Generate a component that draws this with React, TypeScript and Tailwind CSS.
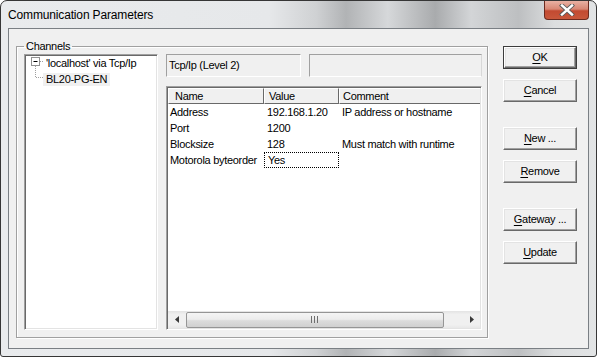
const rows = [
  { name: "Address", value: "192.168.1.20", comment: "IP address or hostname" },
  { name: "Port", value: "1200", comment: "" },
  { name: "Blocksize", value: "128", comment: "Must match with runtime" },
  { name: "Motorola byteorder", value: "Yes", comment: "", focus: true },
];

const buttons = [
  { key: "O", rest: "K", def: true, mt: "mt-[17px]" },
  { key: "C", rest: "ancel", mt: "mt-[10px]" },
  { key: "N", rest: "ew ...", mt: "mt-[25px]" },
  { key: "R", rest: "emove", mt: "mt-[10px]" },
  { key: "G", rest: "ateway ...", mt: "mt-[25px]" },
  { key: "U", rest: "pdate", mt: "mt-[10px]" },
];

function DlgButton({ k, rest, def, mt }: { k: string; rest: string; def?: boolean; mt: string }) {
  return (
    <div className={`${mt} w-[74px] h-[23px] ${def ? "border border-[#3c3c3c]" : ""}`}>
      <div className="w-full h-full flex items-center justify-center bg-[#f0f0f0] border border-t-white border-l-white border-b-[#696969] border-r-[#696969] shadow-[inset_-1px_-1px_0_#a0a0a0,inset_1px_1px_0_#e3e3e3] text-[11px] text-black">
        <span>
          <span className="underline underline-offset-2">{k}</span>
          {rest}
        </span>
      </div>
    </div>
  );
}

export default function App() {
  return (
    <div className="w-[597px] h-[357px] overflow-hidden rounded-t-[7px] rounded-b-[3px] border border-[#363636] bg-[linear-gradient(90deg,#e9ebed_0%,#e6e8ea_45%,#cfd1d3_53%,#b1b3b5_58%,#d6d8da_65%,#a9abad_73%,#d3d5d7_79%,#bdbfc1_87%,#dcdedf_93%,#e2e4e5_100%)] font-['Liberation_Sans',Arial,sans-serif] text-black">
      {/* Title bar */}
      <div className="h-[27px] flex items-start">
        <div className="h-[27px] flex items-center pl-[7px] text-[12px] text-black tracking-[-0.15px]">
          Communication Parameters
        </div>
        <div className="ml-auto mr-[7px] w-[45px] h-[19px] rounded-b-[4px] border border-t-0 border-[#6b2a1f] bg-[linear-gradient(180deg,#e9b1a3_0%,#d88774_45%,#c24a31_55%,#c8573b_100%)] flex items-center justify-center">
          <svg width="16" height="12" viewBox="0 0 16 12">
            <path d="M3 1.5 L13 10.5 M13 1.5 L3 10.5" stroke="#5a5a5a" strokeWidth="4.2" strokeLinecap="square" />
            <path d="M3 1.5 L13 10.5 M13 1.5 L3 10.5" stroke="#ffffff" strokeWidth="2.4" strokeLinecap="square" />
          </svg>
        </div>
      </div>

      {/* Client area */}
      <div className="mx-[7px] h-[321px] border border-[#7a7f84] bg-[#f0f0f0] flex items-start tracking-[-0.3px]">
        <fieldset className="ml-[7px] mt-[11px] w-[472px] h-[298px] border border-[#a0a0a0] shadow-[inset_1px_1px_0_#fff,1px_1px_0_#fff]">
          <legend className="ml-[7px] px-[2px] text-[11px] leading-[13px]">Channels</legend>
          <div className="flex gap-[8px] pl-[7px] mt-[1px]">
            {/* Tree */}
            <div className="w-[134px] h-[276px] bg-white border border-t-[#a0a0a0] border-l-[#a0a0a0] border-b-white border-r-white shadow-[inset_1px_1px_0_#696969,inset_-1px_-1px_0_#e3e3e3] p-[1px]">
              <div className="flex -mt-px">
                <svg width="17" height="32" viewBox="0 0 17 32" className="shrink-0">
                  <rect x="5.5" y="2.5" width="8" height="8" fill="#fff" stroke="#919191" />
                  <path d="M7.5 6.5 H11.5" stroke="#000" />
                  <path d="M14 6.5 H17" stroke="#a0a0a0" strokeDasharray="1 1" />
                  <path d="M9.5 11 V23" stroke="#a0a0a0" strokeDasharray="1 1" />
                  <path d="M10 22.5 H17" stroke="#a0a0a0" strokeDasharray="1 1" />
                </svg>
                <div className="text-[11px]">
                  <div className="h-[16px] flex items-center">
                    <span className="px-[3px] leading-[13px]">'localhost' via Tcp/Ip</span>
                  </div>
                  <div className="h-[16px] flex items-center">
                    <span className="px-[3px] leading-[13px] bg-[#f0f0f0]">BL20-PG-EN</span>
                  </div>
                </div>
              </div>
            </div>

            {/* Right column */}
            <div className="w-[316px] flex flex-col">
              <div className="flex gap-[8px]">
                <div className="w-[135px] h-[23px] border border-t-[#a0a0a0] border-l-[#a0a0a0] border-b-white border-r-white flex items-center pl-[2px] text-[11px]">
                  Tcp/Ip (Level 2)
                </div>
                <div className="w-[173px] h-[23px] border border-t-[#a0a0a0] border-l-[#a0a0a0] border-b-white border-r-[#d8d8d8]" />
              </div>

              {/* List view */}
              <div className="mt-[9px] h-[244px] bg-white border border-t-[#a0a0a0] border-l-[#a0a0a0] border-b-white border-r-white shadow-[inset_1px_1px_0_#696969,inset_-1px_-1px_0_#e3e3e3] p-[1px] flex flex-col text-[11px]">
                <div className="h-[16px] flex bg-[#f0f0f0] shrink-0">
                  <div className="w-[96px] pl-[6px] flex items-center border-t border-l border-t-white border-l-white border-r border-b border-r-[#696969] border-b-[#696969]">Name</div>
                  <div className="w-[75px] pl-[4px] flex items-center border-t border-l border-t-white border-l-white border-r border-b border-r-[#696969] border-b-[#696969]">Value</div>
                  <div className="flex-1 pl-[3px] flex items-center border-t border-l border-t-white border-l-white border-b border-b-[#696969]">Comment</div>
                </div>
                {rows.map((r) => (
                  <div key={r.name} className="h-[16px] flex items-center">
                    <div className="w-[96px] pl-[2px] whitespace-nowrap">{r.name}</div>
                    <div className={`w-[75px] h-[16px] pl-[3px] flex items-center ${r.focus ? "border border-dotted border-black pl-[2px]" : ""}`}>
                      {r.value}
                    </div>
                    <div className="flex-1 pl-[3px] whitespace-nowrap">{r.comment}</div>
                  </div>
                ))}
                <div className="flex-1" />
                {/* Horizontal scrollbar */}
                <div className="h-[17px] flex items-center bg-[linear-gradient(180deg,#e3e3e3_0%,#f0f0f0_20%,#f0f0f0_80%,#e8e8e8_100%)] shrink-0">
                  <div className="w-[17px] h-[17px] flex items-center justify-center">
                    <svg width="4" height="7" viewBox="0 0 4 7">
                      <path d="M4 0 L0 3.5 L4 7 Z" fill="#3a3a3a" />
                    </svg>
                  </div>
                  <div className="ml-[1px] w-[258px] h-[16px] rounded-[2px] border border-[#959595] bg-[linear-gradient(180deg,#f5f5f5_0%,#ececec_45%,#dcdcdc_55%,#d0d0d0_100%)] flex items-center justify-center">
                    <svg width="8" height="7" viewBox="0 0 8 7">
                      <path d="M0.5 0 V7 M3.5 0 V7 M6.5 0 V7" stroke="#6e6e6e" />
                    </svg>
                  </div>
                  <div className="flex-1" />
                  <div className="w-[17px] h-[17px] flex items-center justify-center">
                    <svg width="4" height="7" viewBox="0 0 4 7">
                      <path d="M0 0 L4 3.5 L0 7 Z" fill="#3a3a3a" />
                    </svg>
                  </div>
                </div>
              </div>
            </div>
          </div>
        </fieldset>

        {/* Buttons */}
        <div className="ml-[15px] flex flex-col">
          {buttons.map((b) => (
            <DlgButton key={b.key} k={b.key} rest={b.rest} def={b.def} mt={b.mt} />
          ))}
        </div>
      </div>
    </div>
  );
}
